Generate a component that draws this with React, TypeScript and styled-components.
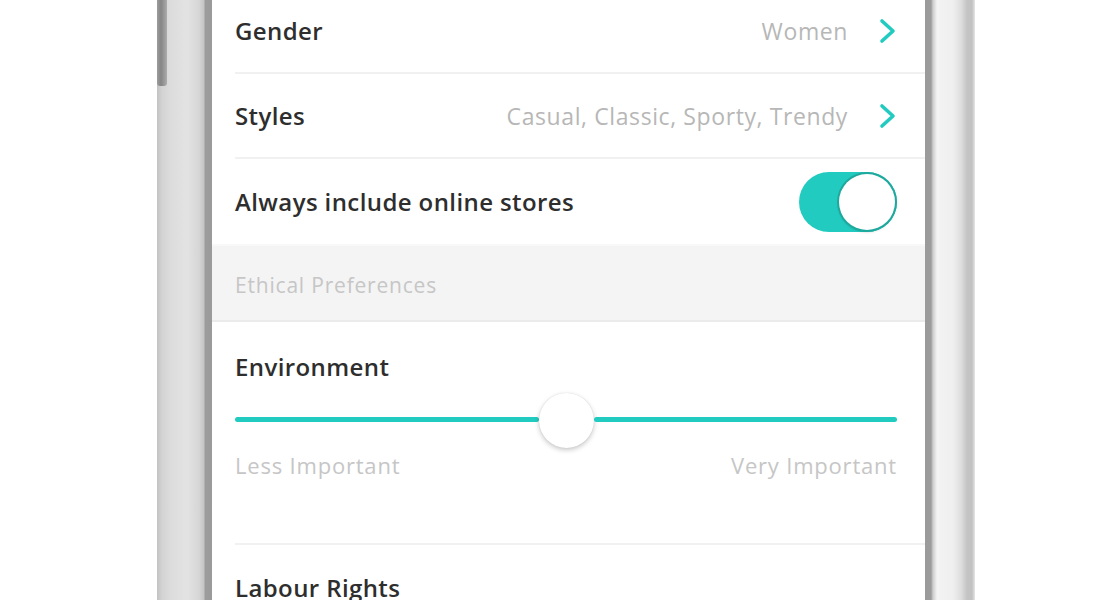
import React from "react";
import styled, { createGlobalStyle } from "styled-components";

const teal = "#22cbbf";

const GlobalStyle = createGlobalStyle`
  html, body {
    margin: 0;
    padding: 0;
    background: #fff;
    overflow: hidden;
  }
  body {
    font-family: "Open Sans", Lato, Arial, sans-serif;
  }
`;

const Stage = styled.div`
  display: flex;
  height: 600px;
  padding-left: 157px;
`;

const LeftBezel = styled.div`
  position: relative;
  width: 55px;
  flex-shrink: 0;
  background: linear-gradient(
    to right,
    #c2c2c2 0px,
    #d3d3d3 5px,
    #dcdcdc 14px,
    #e3e3e3 30px,
    #d6d6d6 42px,
    #c4c4c4 47px,
    #9c9c9c 48px,
    #9a9a9a 55px
  );
`;

const SideButton = styled.div`
  position: absolute;
  left: 0;
  top: 0;
  width: 10px;
  height: 86px;
  border-radius: 0 0 3px 3px;
  background: linear-gradient(to right, #9c9c9c, #858585 40%, #acacac);
`;

const RightBezel = styled.div`
  width: 50px;
  flex-shrink: 0;
  background: linear-gradient(
    to right,
    #9a9a9a 0px,
    #9c9c9c 6px,
    #cdcdcd 8px,
    #f3f3f3 12px,
    #efefef 28px,
    #dedede 36px,
    #c4c4c4 42px,
    #c2c2c2 47px,
    #e6e6e6 50px
  );
`;

const Screen = styled.div`
  width: 713px;
  flex-shrink: 0;
  background: #fff;
  overflow: hidden;
`;

const List = styled.div`
  margin-top: -11px;
  display: flex;
  flex-direction: column;
`;

const Row = styled.div<{ $last?: boolean }>`
  height: 85px;
  margin-left: 23px;
  padding-right: 28px;
  display: flex;
  align-items: center;
  justify-content: space-between;
  border-bottom: ${(p) => (p.$last ? "none" : "2px solid #f1f1f1")};
  box-sizing: border-box;
`;

const Label = styled.span`
  font-size: 24px;
  font-weight: 600;
  color: #2e2e2e;
  letter-spacing: 0.4px;
`;

const Value = styled.span`
  display: flex;
  align-items: center;
  gap: 31px;
  font-size: 23px;
  letter-spacing: 0.6px;
  color: #b7b7b7;
`;

const SectionHeader = styled.div`
  height: 78px;
  padding-left: 23px;
  display: flex;
  align-items: center;
  background: #f4f4f4;
  border-top: 2px solid #f8f8f8;
  border-bottom: 2px solid #ebebeb;
  box-sizing: border-box;
  padding-top: 4px;
  font-size: 21px;
  letter-spacing: 0.8px;
  color: #c6c6c6;
`;

const Toggle = styled.div<{ $on: boolean }>`
  width: 98px;
  height: 60px;
  border-radius: 30px;
  background: ${(p) => (p.$on ? teal : "#e5e5e5")};
  display: flex;
  justify-content: ${(p) => (p.$on ? "flex-end" : "flex-start")};
  align-items: center;
  padding: 2px;
  box-sizing: border-box;
`;

const Knob = styled.div`
  width: 56px;
  height: 56px;
  border-radius: 50%;
  background: #fff;
  box-shadow: 0 0 0 2px #1fa89e, 0 2px 3px rgba(0, 0, 0, 0.2);
`;

const SliderBlock = styled.div`
  height: 223px;
  margin-left: 23px;
  padding-right: 28px;
  display: flex;
  flex-direction: column;
  border-bottom: 2px solid #f1f1f1;
  box-sizing: border-box;
`;

const SliderTitle = styled(Label)`
  margin-top: 30px;
  line-height: 30px;
`;

const Track = styled.div`
  margin-top: 9px;
  height: 56px;
  display: flex;
  align-items: center;
`;

const TrackLine = styled.div`
  flex: 1;
  height: 5px;
  background: ${teal};
  border-radius: 3px;
`;

const Thumb = styled.div`
  width: 55px;
  height: 55px;
  border-radius: 50%;
  background: #fff;
  flex-shrink: 0;
  margin-top: 3px;
  box-shadow: 0 2px 5px rgba(0, 0, 0, 0.22), 0 0 1px rgba(0, 0, 0, 0.15);
`;

const Scale = styled.div`
  margin-top: 3px;
  display: flex;
  justify-content: space-between;
  font-size: 22px;
  letter-spacing: 0.8px;
  color: #c6c6c6;
  line-height: 30px;
`;

const Chevron = () => (
  <svg width="18" height="26" viewBox="0 0 18 26" fill="none">
    <polyline
      points="3,3 14,13 3,23"
      stroke={teal}
      strokeWidth="3.6"
      strokeLinecap="round"
      strokeLinejoin="round"
    />
  </svg>
);

export default function App() {
  return (
    <>
      <GlobalStyle />
      <Stage>
        <LeftBezel>
          <SideButton />
        </LeftBezel>
        <Screen>
          <List>
            <Row>
              <Label>Gender</Label>
              <Value>
                Women
                <Chevron />
              </Value>
            </Row>
            <Row>
              <Label>Styles</Label>
              <Value>
                Casual, Classic, Sporty, Trendy
                <Chevron />
              </Value>
            </Row>
            <Row $last>
              <Label>Always include online stores</Label>
              <Toggle $on>
                <Knob />
              </Toggle>
            </Row>
            <SectionHeader>Ethical Preferences</SectionHeader>
            <SliderBlock>
              <SliderTitle>Environment</SliderTitle>
              <Track>
                <TrackLine />
                <Thumb />
                <TrackLine />
              </Track>
              <Scale>
                <span>Less Important</span>
                <span>Very Important</span>
              </Scale>
            </SliderBlock>
            <Row $last>
              <Label>Labour Rights</Label>
            </Row>
          </List>
        </Screen>
        <RightBezel />
      </Stage>
    </>
  );
}
